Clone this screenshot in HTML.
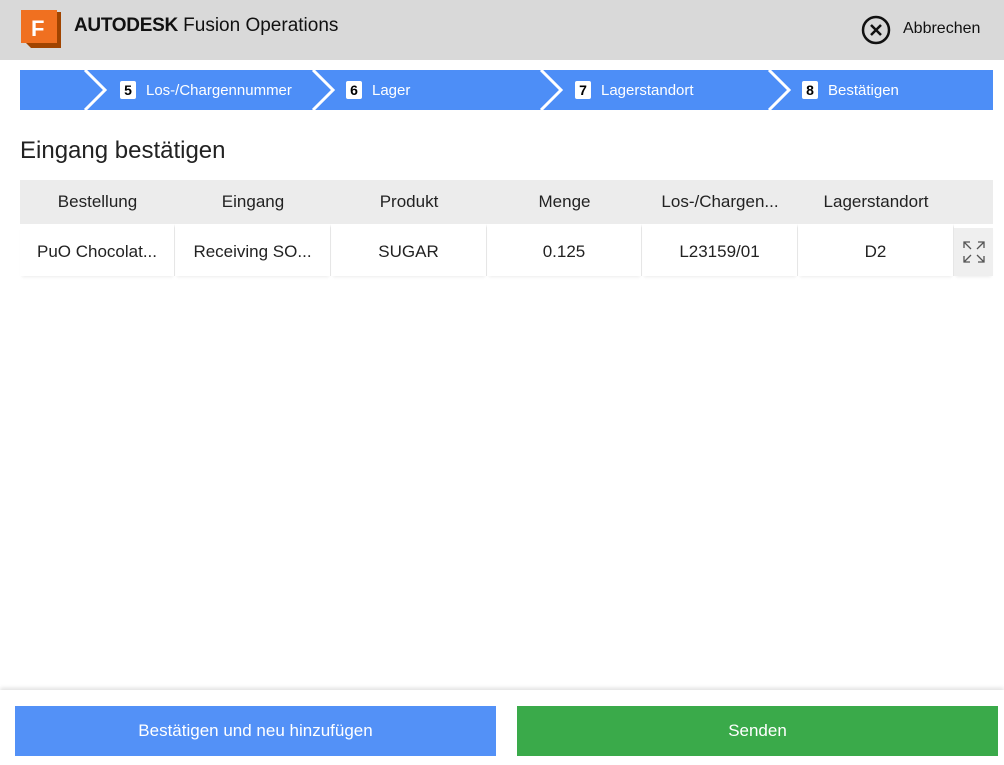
<!DOCTYPE html><html><head><style>
body{margin:0;width:1004px;height:765px;position:relative;font-family:"Liberation Sans",sans-serif;background:#fff;overflow:hidden}
.hdr{position:absolute;left:0;top:0;width:1004px;height:60px;background:#d9d9d9}
.steps{position:absolute;left:20px;top:70px;width:973px;height:40px;background:#4d8ef7;color:#fff;font-size:15px}
.st{position:absolute;top:1px;height:40px;line-height:40px}
.st b{display:inline-block;background:#fff;color:#000;width:16px;height:18px;line-height:18px;text-align:center;border-radius:2px;margin-right:10px;font-size:14px}
table{position:absolute;left:20px;top:180px;width:973px;border-collapse:separate;border-spacing:0;font-size:17px;color:#222}
th{background:#ececec;font-weight:normal;height:44px;text-align:center;padding:0}
td{height:48px;text-align:center;border-top:4px solid #fff;border-right:1px solid #e6e6e6;padding:0;box-shadow:0 3px 3px -2px rgba(0,0,0,.08)}
.ft{position:absolute;left:0;top:690px;width:1004px;height:75px;box-shadow:0 -2px 4px rgba(0,0,0,.12);background:#fff}
.btn{position:absolute;top:16px;height:50px;line-height:50px;color:#fff;text-align:center;font-size:17px}
</style></head><body>
<div class="hdr">
<svg style="position:absolute;left:19px;top:9px" width="46" height="42"><path d="M6 3h36v36H12l-6-6z" fill="#a04400"/><rect x="2" y="1" width="36" height="33" fill="#f07020"/><text x="12" y="27" font-family="Liberation Sans" font-weight="bold" font-size="22" fill="#fff">F</text></svg>
<div style="position:absolute;left:74px;top:15px;font-size:19px;color:#111"><b style="letter-spacing:-0.3px">AUTODESK</b> Fusion Operations</div>
<svg style="position:absolute;left:861px;top:15px" width="30" height="30"><circle cx="15" cy="15" r="13" fill="none" stroke="#111" stroke-width="2.5"/><path d="M10 10l10 10M20 10l-10 10" stroke="#111" stroke-width="2.5"/></svg>
<div style="position:absolute;left:903px;top:20px;font-size:16px;color:#111">Abbrechen</div>
</div>
<div class="steps">
<svg style="position:absolute;left:0;top:0" width="973" height="40"><g fill="none" stroke="#fff" stroke-width="3"><path d="M65 0l20 20-20 20M293 0l20 20-20 20M521 0l20 20-20 20M749 0l20 20-20 20"/></g></svg>
<div class="st" style="left:100px"><b>5</b>Los-/Chargennummer</div>
<div class="st" style="left:326px"><b>6</b>Lager</div>
<div class="st" style="left:555px"><b>7</b>Lagerstandort</div>
<div class="st" style="left:782px"><b>8</b>Bestätigen</div>
</div>
<div style="position:absolute;left:20px;top:137px;font-size:24px;color:#222">Eingang bestätigen</div>
<table><tr><th style="width:155px">Bestellung</th><th style="width:156px">Eingang</th><th style="width:156px">Produkt</th><th style="width:155px">Menge</th><th style="width:156px">Los-/Chargen...</th><th style="width:156px">Lagerstandort</th><th style="width:39px"></th></tr>
<tr><td>PuO Chocolat...</td><td>Receiving SO...</td><td>SUGAR</td><td>0.125</td><td>L23159/01</td><td>D2</td><td style="background:#efefef;border-right:0"><svg width="24" height="24" style="vertical-align:middle"><g fill="none" stroke="#555" stroke-width="1.3"><path d="M2 8V2h6M2 2l7 7M16 2h6v6M22 2l-7 7M2 16v6h6M2 22l7-7M22 16v6h-6M22 22l-7-7"/></g></svg></td></tr></table>
<div class="ft">
<div class="btn" style="left:15px;width:481px;background:#5391f7">Bestätigen und neu hinzufügen</div>
<div class="btn" style="left:517px;width:481px;background:#3aaa4a">Senden</div>
</div>
</body></html>
